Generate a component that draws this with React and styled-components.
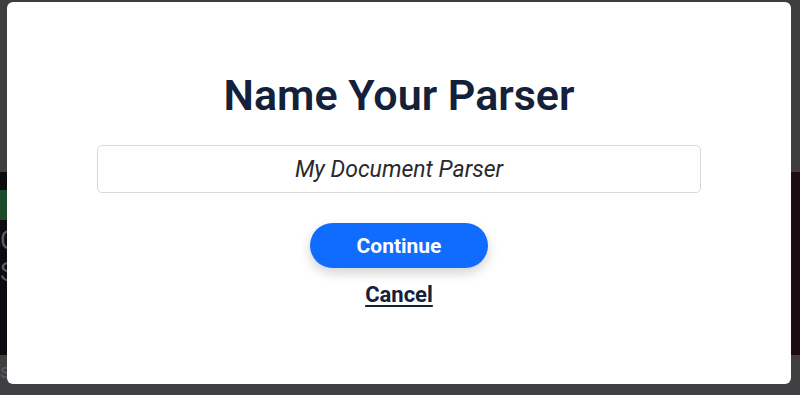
import React from "react";
import styled, { createGlobalStyle } from "styled-components";

const Global = createGlobalStyle`
  html, body { margin: 0; padding: 0; }
  body { width: 800px; height: 395px; overflow: hidden; font-family: Roboto, "Liberation Sans", sans-serif; }
  * { box-sizing: border-box; }
`;

const Page = styled.div`
  width: 800px;
  height: 395px;
  display: flex;
  flex-direction: column;
  background: #3f3f41;
  position: relative;
`;

const TopArea = styled.div`
  height: 172px;
  background: #3e3e40;
`;

const Band = styled.div`
  height: 183px;
  display: flex;
  background: #0c0b10;
`;

const BandLeft = styled.div`
  flex: 1;
  display: flex;
  flex-direction: column;
  padding-top: 18px;
  gap: 8px;
  color: #5a5a5e;
  font-size: 26px;
  line-height: 24px;
`;

const Badge = styled.div`
  width: 60px;
  height: 30px;
  background: #1d4a2a;
  color: #0a0a0a;
  font-size: 18px;
  font-weight: 700;
  line-height: 30px;
  text-align: right;
`;

const BandRight = styled.div`
  width: 12px;
  background: #1c0c10;
`;

const BottomArea = styled.div`
  flex: 1;
  color: #5a5a5e;
  font-size: 20px;
  padding-top: 4px;
`;

const Overlay = styled.div`
  position: absolute;
  inset: 0;
  display: flex;
  align-items: flex-start;
  padding: 2px 9px 0 7px;
`;

const Modal = styled.div`
  width: 784px;
  height: 382px;
  background: #ffffff;
  border-radius: 6px;
  display: flex;
  flex-direction: column;
  align-items: center;
  padding: 68px 90px 0;
`;

const Title = styled.h1`
  margin: 0;
  font-family: Roboto, "Liberation Sans", sans-serif;
  font-size: 43px;
  line-height: 51px;
  font-weight: 600;
  color: #13213b;
`;

const NameInput = styled.input`
  margin-top: 24px;
  width: 100%;
  height: 48px;
  border: 1px solid #d6d9de;
  border-radius: 5px;
  text-align: center;
  font-family: Roboto, "Liberation Sans", sans-serif;
  font-style: italic;
  font-weight: 400;
  font-size: 23px;
  color: #2a2a2e;
  background: #fff;
  outline: none;
  padding: 0 12px;
`;

const PrimaryButton = styled.button`
  margin-top: 30px;
  width: 178px;
  height: 45px;
  border: none;
  border-radius: 23px;
  background: #0f6cff;
  color: #ffffff;
  font-family: Roboto, "Liberation Sans", sans-serif;
  font-size: 21px;
  font-weight: 700;
  box-shadow: 0 5px 12px rgba(0, 0, 0, 0.18);
  cursor: pointer;
`;

const LinkButton = styled.button`
  margin-top: 14px;
  border: none;
  background: none;
  padding: 0;
  font-family: Roboto, "Liberation Sans", sans-serif;
  font-size: 22px;
  line-height: 26px;
  font-weight: 700;
  color: #13213b;
  text-decoration: underline;
  text-underline-offset: 3px;
  text-decoration-thickness: 2px;
  cursor: pointer;
`;

export default function App() {
  return (
    <>
      <Global />
      <Page>
        <TopArea />
        <Band>
          <BandLeft>
            <Badge>Nu</Badge>
            <span>C</span>
            <span>S</span>
          </BandLeft>
          <BandRight />
        </Band>
        <BottomArea>s</BottomArea>
        <Overlay>
          <Modal>
            <Title>Name Your Parser</Title>
            <NameInput defaultValue="My Document Parser" />
            <PrimaryButton>Continue</PrimaryButton>
            <LinkButton>Cancel</LinkButton>
          </Modal>
        </Overlay>
      </Page>
    </>
  );
}
